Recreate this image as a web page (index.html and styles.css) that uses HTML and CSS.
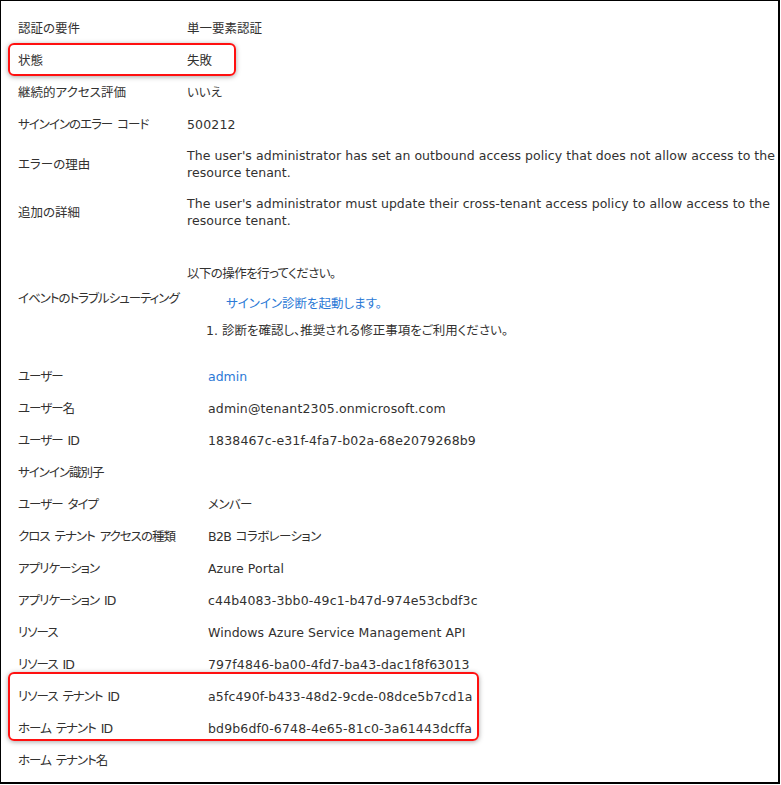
FILE: index.html
```html
<!DOCTYPE html>
<html lang="ja">
<head>
<meta charset="utf-8">
<link rel="stylesheet" href="styles.css">
</head>
<body>
<div class="panel">
  <div class="section top">
    <div class="row"><div class="label">認証の要件</div><div class="value">単一要素認証</div></div>
    <div class="row hl"><div class="label">状態</div><div class="value">失敗</div></div>
    <div class="row"><div class="label">継続的アクセス評価</div><div class="value">いいえ</div></div>
    <div class="row"><div class="label kana">サインインのエラー コード</div><div class="value id">500212</div></div>
    <div class="row multi"><div class="label">エラーの理由</div><div class="value prose">The user's administrator has set an outbound access policy that does not allow access to the resource tenant.</div></div>
    <div class="row multi second"><div class="label">追加の詳細</div><div class="value prose">The user's administrator must update their cross-tenant access policy to allow access to the resource tenant.</div></div>
    <div class="row trouble">
      <div class="label kana">イベントのトラブルシューティング</div>
      <div class="value">
        <div class="t-line kana-soft">以下の操作を行ってください。</div>
        <div class="t-line t-link"><a class="link" href="#">サインイン診断を起動します。</a></div>
        <div class="t-line t-item"><span class="num">1.</span><span>診断を確認し、推奨される修正事項をご利用ください。</span></div>
      </div>
    </div>
  </div>
  <div class="section bottom">
    <div class="row"><div class="label kana">ユーザー</div><div class="value"><a class="link" href="#">admin</a></div></div>
    <div class="row"><div class="label kana">ユーザー名</div><div class="value id">admin@tenant2305.onmicrosoft.com</div></div>
    <div class="row"><div class="label kana">ユーザー ID</div><div class="value id">1838467c-e31f-4fa7-b02a-68e2079268b9</div></div>
    <div class="row"><div class="label kana">サインイン識別子</div><div class="value"></div></div>
    <div class="row"><div class="label kana">ユーザー タイプ</div><div class="value kana-soft">メンバー</div></div>
    <div class="row"><div class="label kana">クロス テナント アクセスの種類</div><div class="value kana-soft">B2B コラボレーション</div></div>
    <div class="row"><div class="label kana">アプリケーション</div><div class="value prose">Azure Portal</div></div>
    <div class="row"><div class="label kana">アプリケーション ID</div><div class="value id">c44b4083-3bb0-49c1-b47d-974e53cbdf3c</div></div>
    <div class="row"><div class="label kana">リソース</div><div class="value prose">Windows Azure Service Management API</div></div>
    <div class="row"><div class="label kana">リソース ID</div><div class="value id">797f4846-ba00-4fd7-ba43-dac1f8f63013</div></div>
    <div class="hl-group">
      <div class="row"><div class="label kana">リソース テナント ID</div><div class="value id">a5fc490f-b433-48d2-9cde-08dce5b7cd1a</div></div>
      <div class="row"><div class="label kana">ホーム テナント ID</div><div class="value id">bd9b6df0-6748-4e65-81c0-3a61443dcffa</div></div>
    </div>
    <div class="row"><div class="label kana">ホーム テナント名</div><div class="value"></div></div>
  </div>
</div>
</body>
</html>
```
FILE: styles.css
```css
html, body {
  margin: 0;
  padding: 0;
  background: #ffffff;
}

.panel {
  box-sizing: border-box;
  width: 780px;
  height: 784px;
  border-top: 1px solid #000;
  border-left: 1px solid #000;
  border-right: 2px solid #000;
  border-bottom: 2px solid #000;
  padding-top: 11px;
  font-family: "DejaVu Sans", "Noto Sans CJK JP", sans-serif;
  font-size: 12.5px;
  font-feature-settings: "palt";
  color: #323130;
  overflow: hidden;
}

.row {
  position: relative;
  display: grid;
  min-height: 32px;
  align-items: center;
  padding-left: 17px;
  line-height: 17px;
}

.label {
  white-space: nowrap;
}

.label.kana {
  letter-spacing: -1px;
  word-spacing: 2px;
}

.kana-soft {
  letter-spacing: -0.6px;
  word-spacing: 1px;
}

.top .row {
  grid-template-columns: 169px 1fr;
}

.bottom .row {
  grid-template-columns: 190px 1fr;
}

.value.prose {
  letter-spacing: 0.05px;
}

.value.id {
  letter-spacing: 0.15px;
}

.row.multi {
  padding-top: 7px;
  padding-bottom: 7px;
  padding-right: 2px;
}

.row.multi.second {
  padding-bottom: 8px;
}

.row.trouble .value {
  padding-top: 27px;
  padding-bottom: 19px;
}

.t-line {
  line-height: 20px;
}

.t-link {
  margin-top: 10px;
  padding-left: 39px;
}

.t-item {
  margin-top: 7px;
  padding-left: 19px;
  display: flex;
  gap: 4px;
  word-spacing: 2px;
}

.link {
  color: #2b79d6;
  text-decoration: none;
}

.row.hl::after {
  content: "";
  position: absolute;
  left: 7px;
  top: -1px;
  width: 228px;
  height: 33px;
  box-sizing: border-box;
  border: 2px solid #ff1010;
  border-radius: 6px;
  box-shadow: 0 1px 5px rgba(0, 0, 0, 0.35);
  pointer-events: none;
}

.hl-group {
  position: relative;
}

.hl-group::after {
  content: "";
  position: absolute;
  left: 7px;
  top: -8px;
  width: 471px;
  height: 69px;
  box-sizing: border-box;
  border: 2px solid #ff1010;
  border-radius: 6px;
  box-shadow: 0 1px 5px rgba(0, 0, 0, 0.35);
  pointer-events: none;
}
```
